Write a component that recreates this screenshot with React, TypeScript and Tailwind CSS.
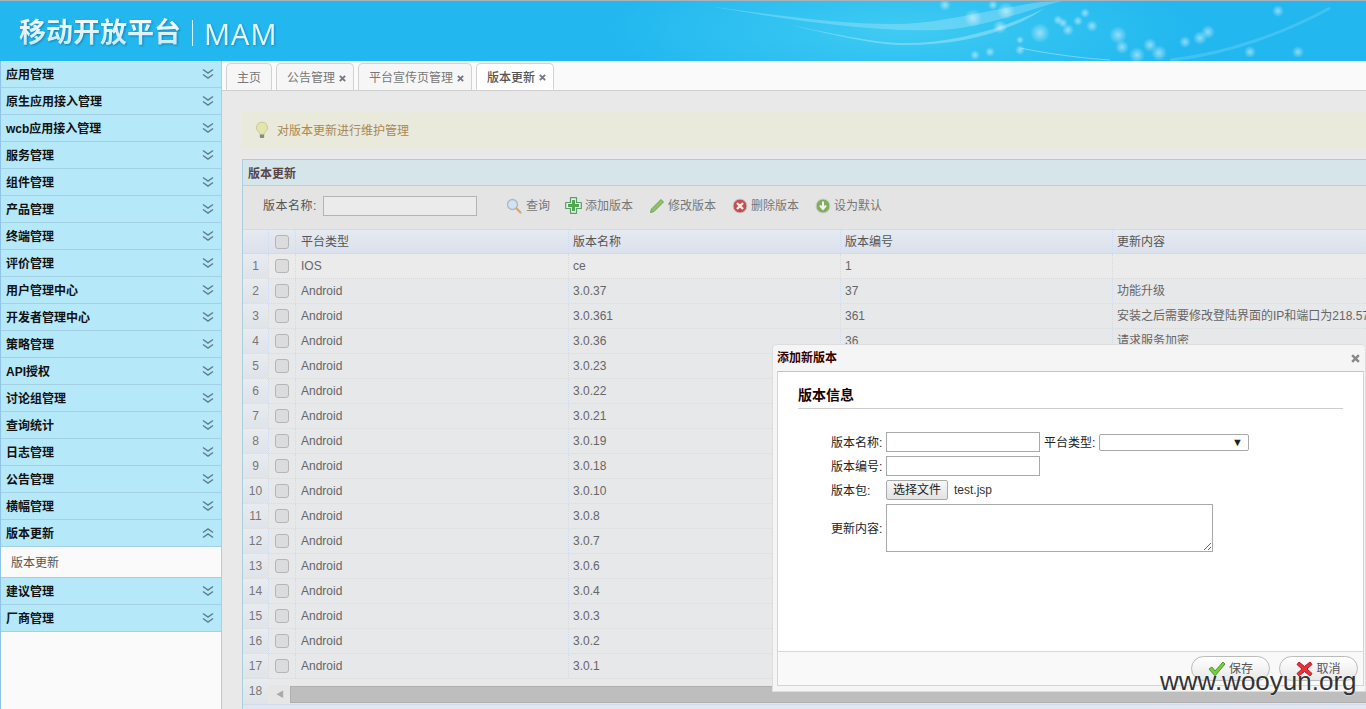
import React from 'react';

const font = "font-['Liberation_Sans','Noto_Sans_CJK_SC',sans-serif]";

const menus = ['应用管理', '原生应用接入管理', 'wcb应用接入管理', '服务管理', '组件管理', '产品管理', '终端管理', '评价管理', '用户管理中心', '开发者管理中心', '策略管理', 'API授权', '讨论组管理', '查询统计', '日志管理', '公告管理', '横幅管理'];

const rows = [
  ['IOS', 'ce', '1', ''],
  ['Android', '3.0.37', '37', '功能升级'],
  ['Android', '3.0.361', '361', '安装之后需要修改登陆界面的IP和端口为218.57'],
  ['Android', '3.0.36', '36', '请求服务加密'],
  ['Android', '3.0.23', '', ''],
  ['Android', '3.0.22', '', ''],
  ['Android', '3.0.21', '', ''],
  ['Android', '3.0.19', '', ''],
  ['Android', '3.0.18', '', ''],
  ['Android', '3.0.10', '', ''],
  ['Android', '3.0.8', '', ''],
  ['Android', '3.0.7', '', ''],
  ['Android', '3.0.6', '', ''],
  ['Android', '3.0.4', '', ''],
  ['Android', '3.0.3', '', ''],
  ['Android', '3.0.2', '', ''],
  ['Android', '3.0.1', '', ''],
];

function Chevrons({ up }: { up?: boolean }) {
  return (
    <svg width="14" height="12" viewBox="0 0 14 12" fill="none" stroke="#5f7f8c" strokeWidth="1.5" className={up ? 'rotate-180' : ''}>
      <path d="M2 1.500 7 5l5-3.500" />
      <path d="M2 6.500 7 10l5-3.500" />
    </svg>
  );
}

function MenuRow({ label, up }: { label: string; up?: boolean }) {
  return (
    <div className="flex h-[27px] items-center justify-between border-b border-[#a3d0e4] bg-[#b5e8f9] pl-[5px] pr-[6px]">
      <span className="pt-[2px] text-[12px] font-bold text-[#111]">{label}</span>
      <Chevrons up={up} />
    </div>
  );
}

function Cross({ size, color }: { size: number; color: string }) {
  return (
    <svg width={size} height={size} viewBox="0 0 8 8" stroke={color} strokeWidth="2.200">
      <path d="m1 1 6 6M7 1 1 7" />
    </svg>
  );
}

function Tab({ label, active, close = true, w }: { label: string; active?: boolean; close?: boolean; w: string }) {
  return (
    <div className={`${w} flex h-[27px] items-center gap-[4px] rounded-t-[5px] border pl-[10px] text-[12px] ${active ? 'border-[#d2d2d2] border-b-white bg-white font-medium text-[#555]' : 'border-[#d2d2d2] border-b-0 bg-[#f6f6f6] text-[#777]'}`}>
      <span className="pt-[2px]">{label}</span>
      {close && <span className="pt-[2px]"><Cross size={7} color="#778" /></span>}
    </div>
  );
}

function Bulb() {
  return (
    <svg width="14" height="18" viewBox="0 0 14 18">
      <path d="M7 1a5.600 5.600 0 0 0-3 10.300c.6.5.8 1.300.8 2h4.400c0-.7.2-1.500.8-2A5.600 5.600 0 0 0 7 1Z" fill="#e3e5ac" stroke="#c9caa0" />
      <rect x="4.800" y="13.500" width="4.400" height="3.400" rx="1" fill="#8a8a80" />
    </svg>
  );
}

function ToolIcon({ kind }: { kind: string }) {
  if (kind === 'search')
    return (
      <svg width="17" height="16" viewBox="0 0 17 16">
        <circle cx="6.500" cy="6.500" r="5" fill="#cfe3f3" stroke="#a9b9c6" strokeWidth="1.300" />
        <path d="m10.500 10.500 4 4" stroke="#dca766" strokeWidth="2.200" strokeLinecap="round" />
      </svg>
    );
  if (kind === 'add')
    return (
      <svg width="17" height="17" viewBox="0 0 17 17">
        <path d="M5.500 .7h6v4.800h4.800v6h-4.800v4.800h-6v-4.800H.7v-6h4.800Z" fill="#e8efe8" stroke="#5d9c6c" strokeWidth="1.200" strokeLinejoin="round" />
        <path d="M7 3h3v4h4v3h-4v4H7v-4H3V7h4Z" fill="#4fa84f" />
      </svg>
    );
  if (kind === 'edit')
    return (
      <svg width="16" height="16" viewBox="0 0 16 16">
        <path d="M12 1.500 14.500 4 5 13.500l-3.500 1 1-3.500Z" fill="#8cc36a" stroke="#6fa253" />
      </svg>
    );
  if (kind === 'del')
    return (
      <svg width="16" height="16" viewBox="0 0 16 16">
        <circle cx="8" cy="8" r="7" fill="#c1504f" stroke="#cfcfcf" />
        <path d="m5 5 6 6M11 5l-6 6" stroke="#eee" strokeWidth="2.400" />
      </svg>
    );
  return (
    <svg width="16" height="16" viewBox="0 0 16 16">
      <circle cx="8" cy="8" r="7" fill="#7fae5f" stroke="#cfcfcf" />
      <path d="M8 3.500v6M5 7.500l3 3.500 3-3.500" stroke="#f2f2f2" strokeWidth="2" fill="none" />
    </svg>
  );
}

function ToolButton({ kind, label, w }: { kind: string; label: string; w: string }) {
  return (
    <div className={`${w} flex items-center gap-[3px] text-[12px] text-[#777]`}>
      <ToolIcon kind={kind} />
      <span>{label}</span>
    </div>
  );
}

function CheckBox() {
  return <div className="size-[14px] rounded-[3px] border border-[#b5b5b5] bg-[#dcdcdc]" />;
}

function Banner() {
  const dots = [
    [945, 5, 3], [993, 5, 2], [973, 18, 6], [1000, 27, 4], [1020, 40, 1], [990, 52, 2], [975, 55, 2], [1020, 50, 2],
    [1006, 11, 6], [1040, 33, 7], [1058, 20, 2], [1063, 23, 2], [1068, 30, 3], [1078, 21, 2],
    [1092, 26, 3], [1085, 13, 2], [1118, 35, 6], [1122, 47, 4], [1150, 45, 4], [1159, 53, 5], [1185, 42, 3],
    [1200, 38, 4], [1208, 32, 4], [1137, 55, 5], [1250, 52, 3], [1298, 52, 3], [1278, 11, 3],
  ];
  return (
    <svg width="1366" height="60" viewBox="0 1 1366 60" className="absolute left-0 top-0">
      <defs>
        <radialGradient id="glow">
          <stop offset="0" stopColor="#fff" stopOpacity="0.5" />
          <stop offset="1" stopColor="#fff" stopOpacity="0" />
        </radialGradient>
        <radialGradient id="wash">
          <stop offset="0" stopColor="#3fcbf3" stopOpacity="1" />
          <stop offset="1" stopColor="#3fcbf3" stopOpacity="0" />
        </radialGradient>
      </defs>
      <ellipse cx="900" cy="30" rx="290" ry="70" fill="url(#wash)" />
      <path d="M708 6C780 16 840 24 890 24 940 24 975 12 1040 2l22-1C1020 12 985 28 940 30 880 32 800 22 708 6Z" fill="#fff" fillOpacity="0.22" />
      <path d="M790 25C830 33 870 42 900 43 950 44 1000 30 1045 8 1005 36 950 46 900 45 870 44 830 34 790 25Z" fill="#fff" fillOpacity="0.28" />
      <path d="M1020 48c30 6 60 10 90 12" stroke="#bfeaf9" strokeOpacity="0.5" fill="none" />
      <path d="M1170 60c60-6 120-30 160-52" stroke="#bfeaf9" strokeOpacity="0.2" strokeWidth="3" fill="none" />
      {dots.map(([x, y, r]) => (
        <circle key={`${x}-${y}`} cx={x} cy={y} r={r + 3} fill="url(#glow)" />
      ))}
    </svg>
  );
}

function Field({ label, children }: { label: string; children: React.ReactNode }) {
  return (
    <div className="flex items-center">
      <span className="w-[55px] shrink-0 pt-[2px] text-[12px] text-[#222]">{label}</span>
      {children}
    </div>
  );
}

function Dialog() {
  return (
    <div className="absolute left-[772px] top-[344px] flex h-[348px] w-[594px] flex-col rounded-t-[4px] border border-[#ddd] bg-[#f5f5f5] pl-[4px] pr-[1px] pb-[5px]">
      <div className="flex h-[26px] shrink-0 items-center justify-between pr-[4px]">
        <span className="text-[12px] font-bold text-[#300]">添加新版本</span>
        <Cross size={9} color="#888" />
      </div>
      <div className="flex min-h-0 flex-1 flex-col border border-[#d5d5d5] border-t-[#a5cfe0] bg-white">
        <div className="flex-1 px-[20px] pt-[13px]">
          <div className="border-b border-[#ccc] pb-[3px] text-[14px] font-bold leading-[20px] text-[#200]">版本信息</div>
          <div className="flex flex-col gap-[4px] pl-[33px] pt-[23px]">
            <Field label="版本名称:">
              <input className="h-[20px] w-[154px] border border-[#a9a9a9] bg-white" />
              <span className="ml-[4px] w-[55px] pt-[2px] text-[12px] text-[#222]">平台类型:</span>
              <div className="flex h-[17px] w-[150px] items-center justify-end rounded-[2px] border border-[#a9a9a9] bg-white pr-[5px] text-[11px] leading-none text-[#222]">▼</div>
            </Field>
            <Field label="版本编号:">
              <input className="h-[20px] w-[154px] border border-[#a9a9a9] bg-white" />
            </Field>
            <Field label="版本包:">
              <div className="flex h-[20px] w-[62px] items-center justify-center rounded-[2px] border border-[#a9a9a9] bg-gradient-to-b from-[#f6f6f6] to-[#e3e3e3] text-[12px] text-[#222]">选择文件</div>
              <span className="ml-[6px] text-[12px] text-[#333]">test.jsp</span>
            </Field>
            <Field label="更新内容:">
              <textarea className="h-[48px] w-[327px] border border-[#a9a9a9] bg-white" />
            </Field>
          </div>
        </div>
        <div className="flex h-[34px] shrink-0 justify-end gap-[9px] border-t border-[#d8d8d8] bg-[#f9f9f9] pr-[5px] pt-[4px]">
          <div className="flex h-[25px] w-[79px] items-center justify-center gap-[3px] rounded-full border border-[#bbb] bg-gradient-to-b from-white to-[#e8e8e8] text-[12px] text-[#555]">
            <svg width="18" height="16" viewBox="0 0 18 16"><path d="M1 8l3-2 3 4 8-9 2 2L7 15Z" fill="#77cf3c" stroke="#4d9a2a" /></svg>
            保存
          </div>
          <div className="flex h-[25px] w-[79px] items-center justify-center gap-[3px] rounded-full border border-[#bbb] bg-gradient-to-b from-white to-[#e8e8e8] text-[12px] text-[#555]">
            <svg width="17" height="16" viewBox="0 0 17 16"><path d="M3 1l5.500 4.500L14 1l2 2.500L11 8l5 4.500L14 15l-5.500-4.500L3 15l-2-2.500L6 8 1 3.500Z" fill="#ee2f3a" stroke="#b81a22" /></svg>
            取消
          </div>
        </div>
      </div>
    </div>
  );
}

export default function App() {
  return (
    <div className={`${font} relative h-[709px] w-[1366px] overflow-hidden bg-[#e9e9e9]`}>
      <header className="relative h-[61px] overflow-hidden border-t border-[#a9b4ba] bg-[#22b8ef]">
        <Banner />
        <div className="relative flex h-full items-center pl-[19px] pt-[4px]">
          <span className="bg-gradient-to-b from-white to-[#bfe5f5] bg-clip-text text-[27px] font-bold leading-[34px] text-transparent drop-shadow-[1px_1px_1px_rgba(0,70,110,0.45)]">移动开放平台</span>
          <div className="ml-[11px] h-[26px] w-[1px] bg-[#d8f0fa]" />
          <span className="ml-[11px] mt-[2px] font-['Open_Sans',sans-serif] text-[29px] leading-[34px] tracking-[1px] text-[#e4f5fc] drop-shadow-[1px_1px_1px_rgba(0,70,110,0.35)]">MAM</span>
        </div>
      </header>

      <div className="flex h-[648px]">
        <aside className="w-[222px] shrink-0 border-l border-r border-l-[#8fc3ea] border-r-[#a9d0e0] bg-[#fafafa]">
          {menus.map((m) => (
            <MenuRow key={m} label={m} />
          ))}
          <MenuRow label="版本更新" up />
          <div className="flex h-[30px] items-center pl-[10px] pt-[2px] text-[12px] text-[#555]">版本更新</div>
          <div className="border-t border-[#a3d0e4]">
            <MenuRow label="建议管理" />
            <MenuRow label="厂商管理" />
          </div>
        </aside>

        <main className="min-w-0 flex-1">
          <div className="flex h-[30px] items-end gap-[4px] border-b border-[#cfcfcf] bg-[#fafafa] pl-[4px]">
            <Tab label="主页" close={false} w="w-[46px]" />
            <Tab label="公告管理" w="w-[78px]" />
            <Tab label="平台宣传页管理" w="w-[114px]" />
            <Tab label="版本更新" active w="w-[78px]" />
          </div>

          <div className="pl-[20px] pt-[20px]">
            <div className="flex h-[38px] items-center gap-[8px] bg-[#e9e9dc] pl-[13px] text-[12px] text-[#a98852]">
              <Bulb />
              <span className="pt-[2px]">对版本更新进行维护管理</span>
            </div>

            <section className="mt-[10px] w-[1300px] border-l border-t border-[#a9cedd]">
              <div className="flex h-[26px] items-center border-b border-[#b2d3e2] bg-[#d5e5ea] pl-[5px] pt-[2px] text-[12px] font-bold text-[#5b4646]">版本更新</div>
              <div className="flex h-[43px] items-center bg-[#e4e4e4] pb-[4px] pl-[20px]">
                <span className="w-[60px] text-[12px] tracking-[0.500px] text-[#555]">版本名称:</span>
                <input className="h-[20px] w-[154px] border border-[#b4b4b4] bg-[#ebebeb]" />
                <div className="ml-[29px] flex">
                  <ToolButton kind="search" label="查询" w="w-[59px]" />
                  <ToolButton kind="add" label="添加版本" w="w-[84px]" />
                  <ToolButton kind="edit" label="修改版本" w="w-[83px]" />
                  <ToolButton kind="del" label="删除版本" w="w-[83px]" />
                  <ToolButton kind="ok" label="设为默认" w="w-[83px]" />
                </div>
              </div>

              <div className="grid h-[25px] grid-cols-[25px_28px_273px_272px_272px_1fr] items-center border-y border-[#cfdcef] bg-gradient-to-b from-[#e6eaf1] to-[#dbe1eb] text-[12px] text-[#555]">
                <div />
                <div className="flex h-full items-center justify-center border-x border-dotted border-[#cfdcef]"><CheckBox /></div>
                <div className="flex h-full items-center border-r border-dotted border-[#cfdcef] pl-[5px]">平台类型</div>
                <div className="flex h-full items-center border-r border-dotted border-[#cfdcef] pl-[4px]">版本名称</div>
                <div className="flex h-full items-center border-r border-dotted border-[#cfdcef] pl-[4px]">版本编号</div>
                <div className="pl-[4px]">更新内容</div>
              </div>

              {rows.map((r, i) => (
                <div key={i} className={`grid h-[25px] grid-cols-[25px_28px_273px_272px_272px_1fr] items-center border-b border-dotted border-[#cfdcef] text-[12px] text-[#666] ${i === 0 ? 'bg-[#ebebeb]' : 'bg-[#e6e8ea]'}`}>
                  <div className="flex h-full items-center justify-center bg-gradient-to-b from-[#e8ebef] to-[#dfe4ea] text-[#777]">{i + 1}</div>
                  <div className="flex h-full items-center justify-center border-x border-dotted border-[#cfdcef]"><CheckBox /></div>
                  <div className="flex h-full items-center border-r border-dotted border-[#cfdcef] pl-[5px]">{r[0]}</div>
                  <div className="flex h-full items-center border-r border-dotted border-[#cfdcef] pl-[4px]">{r[1]}</div>
                  <div className="flex h-full items-center border-r border-dotted border-[#cfdcef] pl-[4px]">{r[2]}</div>
                  <div className="overflow-hidden whitespace-nowrap pl-[4px]">{r[3]}</div>
                </div>
              ))}

              <div className="grid h-[25px] grid-cols-[25px_1fr] items-end text-[12px]">
                <div className="flex h-full items-center justify-center bg-gradient-to-b from-[#e8ebef] to-[#dfe4ea] pb-[2px] text-[#777]">18</div>
                <div className="flex h-[19px] items-center bg-[#e6e6e6] pl-[8px]">
                  <span className="text-[8px] leading-none text-[#aaa]">◀</span>
                  <div className="ml-[6px] h-[17px] flex-1 border border-[#b0b0b0] bg-[#bebebe]" />
                </div>
              </div>
              <div className="h-[6px] border-t border-[#cfdcef] bg-[#e3e7ed]" />
            </section>
          </div>
        </main>
      </div>

      <Dialog />

      <div className="absolute left-[1160px] top-[665px] font-['Liberation_Sans',sans-serif] text-[26px] leading-[32px] text-[#333] [text-shadow:0_0_2px_#fff]">www.wooyun.org</div>
    </div>
  );
}
